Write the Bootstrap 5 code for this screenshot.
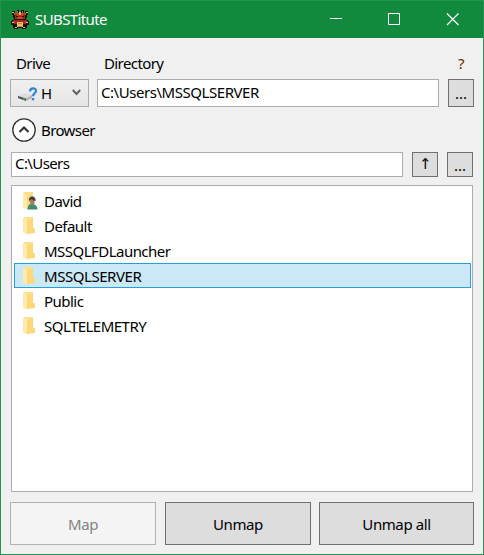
<!DOCTYPE html>
<html lang="en">
<head>
<meta charset="utf-8">
<meta name="viewport" content="width=device-width, initial-scale=1">
<title>SUBSTitute</title>
<link href="https://cdn.jsdelivr.net/npm/bootstrap@5.3.0/dist/css/bootstrap.min.css" rel="stylesheet">
<style>
body{font:15px/20px "Noto Sans","Open Sans",sans-serif;color:#000;background:#f0f0f0;letter-spacing:-.6px}
.window{height:555px;border:1px solid #249352;background:#f0f0f0}
.titlebar{height:37px;background:#128a3e;color:#fff;padding-left:9px}
.titlebar .cap{width:58px;height:37px}
.titlebar .caps{margin-right:1px}
.app-name{margin-left:5px;padding-bottom:1px}
.content{padding:0 9px}
.captions{height:41px;padding-top:15px}
.captions .c-drive{width:94px;padding-left:6px}
.captions .c-help{width:26px;color:#602800}
.btn,.form-control{border-radius:0;font-size:15px;line-height:20px;letter-spacing:inherit;color:#000;padding:0}
.btn{border:1px solid #707070;background:#ddd}
.form-control{border:1px solid #abadb3;background:#fff;padding:0 0 3px 3px;min-width:0}
.dir-input{letter-spacing:-.45px}
.sq{width:26px;flex:none}
.dots{letter-spacing:0}
.up{font-family:"Open Sans","DejaVu Sans",sans-serif;padding-bottom:3px}
.h-top{height:28px}.h-path{height:25px}
.drive{width:79px;flex:none;border-color:#acacac;background:linear-gradient(#f0f0f0,#e5e5e5)}
.gap-dir{gap:9px}
.drive-name{margin-left:2px}
.drive-arrow{margin-right:7px;margin-bottom:1px}
.btn.off{border-color:#adb2b5;background:#f4f4f4;color:#838383;opacity:1}
.browser{height:45px;padding-left:2px;gap:5px}
.path-row{padding:0 1px;gap:9px}
.files{height:307px;border:1px solid #abadb3;border-radius:0;background:#fff;padding:2px 1px 2px 2px;margin:8px 1px 10px}
.files .list-group-item{height:25px;border:1px solid transparent;padding:0 0 0 7px;background:none;color:#000;border-radius:0;margin:0;letter-spacing:-.53px}
.files .list-group-item.sel{background:#cbe8f6;border-color:#26a0da;letter-spacing:-.45px}
.files svg{margin-right:4px}
.actions .btn{height:43px;letter-spacing:-.4px}
.w-a{width:146px}.w-c{width:155px}
.actions .w-a+.w-a{margin-left:1px}
</style>
<script src="https://cdn.jsdelivr.net/npm/bootstrap@5.3.0/dist/js/bootstrap.bundle.min.js"></script>
</head>
<body class="overflow-hidden">
<svg class="d-none">
<symbol id="folder" viewBox="0 0 18 18">
<path d="M2 0h9v10.500l2 1V16H3z" fill="#fbdf90"/><path d="M1 .5l4 2V17.500l-4-2z" fill="#ffe9ad"/><path d="M5 3.500L11 1v10l2 1v4L5 17z" fill="#fbd979"/>
</symbol>
</svg>
<div class="window">
<header class="titlebar d-flex align-items-center">
<svg width="20" height="20" viewBox="0 0 20 20" shape-rendering="crispEdges">
<path fill="#171310" d="M2 1h3v2h2V0h2v2h2V0h3v3h1V1h3v4h-1v3h-1v2h2v1h1v4h-2v3h-1v1h-4v-1H8v1H4v-1H3v-3H1v-4h1v-1h2V8H3V5H2z"/>
<path fill="#b9632d" d="M4 3h3V1h1v2h4V1h1v2h3v2h-1v3H5V5H4z"/>
<path fill="#9b2d18" d="M5 4h10v5H5zM4 10h12v4H4z"/>
<path fill="#d04022" d="M7 3h2v3H7zM11 3h2v3h-2zM7 7h6v2H7zM3 11h2v2H3zM15 11h2v2h-2z"/>
<path fill="#e9bd70" d="M2 2h2v1H2zM16 2h2v1h-2zM9 2h2v3H9zM2 12h2v1H2zM16 12h2v1h-2zM7 12h6v5H7zM5 17h2v1H5zM13 17h2v1h-2z"/>
<path fill="#c78d4b" d="M8 13h4v1H8zM8 16h4v1H8z"/>
<path fill="#171310" d="M6 6h2v1H6zM12 6h2v1h-2zM8 9h4v1H8z"/>
</svg>
<span class="app-name">SUBSTitute</span>
<div class="d-flex ms-auto caps">
<svg class="cap" viewBox="0 0 58 37"><path d="M22 17.500h12" stroke="#fff"/></svg>
<svg class="cap" viewBox="0 0 58 37"><path d="M22.500 12.500h11v11h-11z" fill="none" stroke="#fff"/></svg>
<svg class="cap" viewBox="0 0 58 37"><path d="M23 12.500l11.500 11.500m0-11.500L23 24" stroke="#fff" stroke-width="1.200"/></svg>
</div>
</header>
<main class="content">
<div class="captions d-flex"><span class="c-drive">Drive</span><span class="flex-grow-1">Directory</span><span class="c-help text-center">?</span></div>
<div class="d-flex gap-dir">
<div class="d-flex flex-grow-1 gap-2">
<button class="btn drive h-top d-flex align-items-center" type="button">
<svg class="ms-1" width="24" height="20" viewBox="0 0 24 20"><path d="M3 13l7-2.500 7 1.500v3l-6 3-8-3z" fill="#dcdcdc"/><path d="M3 13l8 2.500V18l-8-3z" fill="#4d504d"/><path d="M11 15.500l6-3.500v3l-6 3z" fill="#b5b5b5"/><path d="M8 15.200l2 .6v1l-2-.6z" fill="#41d45c"/><path d="M15 8.500c.2-4.300 6.300-4 6-.5-.2 2.300-3 2.400-3 5.300" fill="none" stroke="#2b85d2" stroke-width="2.200"/><path d="M16.800 15h2.400v2.300h-2.400z" fill="#2b85d2"/></svg>
<span class="drive-name">H</span>
<svg class="drive-arrow ms-auto" width="9" height="8" viewBox="0 0 9 8"><path d="M.8 1L4.500 5l3.700-4" fill="none" stroke="#606060" stroke-width="1.900"/></svg>
</button>
<input class="form-control dir-input h-top flex-grow-1" value="C:\Users\MSSQLSERVER" aria-label="Directory">
</div>
<button class="btn sq dots h-top" type="button">...</button>
</div>
<div class="browser d-flex align-items-center">
<svg width="24" height="24" viewBox="0 0 24 24"><circle cx="12" cy="12" r="11.200" fill="#fff" stroke="#333" stroke-width="1.300"/><path d="M7.500 14L12 9.500l4.500 4.500" fill="none" stroke="#333" stroke-width="2.200"/></svg>
<span>Browser</span>
</div>
<div class="path-row d-flex">
<input class="form-control h-path flex-grow-1" value="C:\Users" aria-label="Path">
<button class="btn sq up h-path" type="button">↑</button>
<button class="btn sq dots h-path" type="button">...</button>
</div>
<div class="files list-group">
<div class="list-group-item d-flex align-items-center"><svg width="18" height="18" viewBox="0 0 18 18"><use href="#folder"/><path d="M5.500 17.500c0-4 2-5.500 4-5.500s6 1 6 5.500z" fill="#3c906d"/><path d="M7.500 7h5v4l-2 3-2.500-3z" fill="#a47e68"/><path d="M7 9c-1-6 7.500-6 6.500 0-2 0-3-1.500-4-2z" fill="#3e3b38"/></svg><span>David</span></div>
<div class="list-group-item d-flex align-items-center"><svg width="18" height="18"><use href="#folder"/></svg><span>Default</span></div>
<div class="list-group-item d-flex align-items-center"><svg width="18" height="18"><use href="#folder"/></svg><span>MSSQLFDLauncher</span></div>
<div class="list-group-item sel d-flex align-items-center"><svg width="18" height="18"><use href="#folder"/></svg><span>MSSQLSERVER</span></div>
<div class="list-group-item d-flex align-items-center"><svg width="18" height="18"><use href="#folder"/></svg><span>Public</span></div>
<div class="list-group-item d-flex align-items-center"><svg width="18" height="18"><use href="#folder"/></svg><span>SQLTELEMETRY</span></div>
</div>
<div class="actions d-flex justify-content-between">
<button class="btn off w-a" type="button" disabled>Map</button>
<button class="btn w-a" type="button">Unmap</button>
<button class="btn w-c" type="button">Unmap all</button>
</div>
</main>
</div>
</body>
</html>
